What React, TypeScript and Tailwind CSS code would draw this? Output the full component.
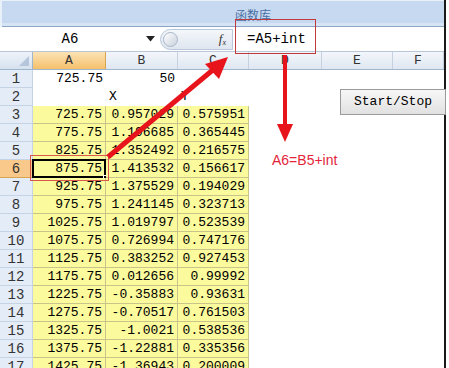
import React from 'react';

const mono = "font-['Liberation_Mono','DejaVu_Sans_Mono',monospace]";

const rows: [string, string, string][] = [
  ['725.75', '50', ''],
  ['', 'X', 'Y'],
  ['725.75', '0.957029', '0.575951'],
  ['775.75', '1.196685', '0.365445'],
  ['825.75', '1.352492', '0.216575'],
  ['875.75', '1.413532', '0.156617'],
  ['925.75', '1.375529', '0.194029'],
  ['975.75', '1.241145', '0.323713'],
  ['1025.75', '1.019797', '0.523539'],
  ['1075.75', '0.726994', '0.747176'],
  ['1125.75', '0.383252', '0.927453'],
  ['1175.75', '0.012656', '0.99992'],
  ['1225.75', '-0.35883', '0.93631'],
  ['1275.75', '-0.70517', '0.761503'],
  ['1325.75', '-1.0021', '0.538536'],
  ['1375.75', '-1.22881', '0.335356'],
  ['1425.75', '-1.36943', '0.200009'],
];

const cols = [
  { name: 'A', w: 'w-[73px]' },
  { name: 'B', w: 'w-[72px]' },
  { name: 'C', w: 'w-[71px]' },
  { name: 'D', w: 'w-[73px]' },
  { name: 'E', w: 'w-[71px]' },
  { name: 'F', w: 'flex-1' },
];

export default function App() {
  return (
    <div className="relative w-[449px] h-[368px] overflow-hidden bg-white">
      <div className="w-[446px] h-full border-r-2 border-[#1a1a1a] flex flex-col">
        {/* ribbon */}
        <div className="shrink-0 h-[27px] bg-[#c6d9f0] border-l-2 border-t border-[#e8f0fa] flex flex-col">
          <div className="flex-1 flex items-end justify-center pl-[60px] pb-[2px]">
            <span className="text-[12px] leading-none text-[#4a6fa5] font-['Noto_Sans_CJK_SC',sans-serif]">函数库</span>
          </div>
          <div className="h-[4px] bg-[#d6e4f5] border-b border-[#8aa4c4]" />
        </div>

        {/* formula bar */}
        <div className="shrink-0 h-[25px] flex items-center bg-white border-b border-[#b8c6d8]">
          <div className={`${mono} w-[140px] text-center text-[14px] text-black`}>A6</div>
          <div className="w-[20px] flex justify-center">
            <svg width="9" height="6" viewBox="0 0 9 6"><path d="M0 0 H9 L4.5 5.5 Z" fill="#222" /></svg>
          </div>
          <div className="relative w-[73px] h-[21px] rounded-l-full border border-[#b9c7d8] bg-gradient-to-b from-[#f4f7fb] to-[#dfe6ef] flex items-center justify-end pr-[6px]">
            <div className="absolute left-[2px] top-[2px] w-[15px] h-[15px] rounded-full border border-[#aab7c8] bg-gradient-to-br from-white to-[#c9d2dd]" />
            <span className="font-['Liberation_Serif',serif] italic text-[13px] text-[#333]">f<sub className="text-[8px]">x</sub></span>
          </div>
          <div className={`${mono} pl-[14px] text-[14px] text-black`}>=A5+int</div>
        </div>

        {/* column header */}
        <div className={`${mono} shrink-0 h-[18px] flex text-[13px] leading-[17px] border-b border-[#9eb6ce]`}>
          <div className="relative w-[33px] bg-gradient-to-b from-[#eef3fa] to-[#d6e1ee] border-r border-[#9eb6ce]">
            <svg className="absolute right-[3px] bottom-[3px]" width="10" height="10" viewBox="0 0 10 10"><path d="M10 0 V10 H0 Z" fill="#b5c6db" /></svg>
          </div>
          {cols.map(c => (
            <div
              key={c.name}
              className={`${c.w} text-center border-r ${c.name === 'A' ? 'bg-gradient-to-b from-[#fbe3b4] to-[#f5c06a] border-[#d9a44f] text-[#333]' : 'bg-gradient-to-b from-[#f3f6fb] to-[#dfe7f1] border-[#c5d1df] text-[#333]'}`}
            >
              {c.name}
            </div>
          ))}
        </div>

        {/* rows */}
        <div className={`${mono} shrink-0 text-[13px] leading-[18px] text-black`}>
          {rows.map((r, i) => {
            const n = i + 1;
            const yellow = n >= 3;
            const sel = n === 6;
            return (
              <div key={n} className="flex h-[18px]">
                <div className={`w-[33px] text-center text-[14px] border-r border-b ${sel ? 'bg-[#f8c98a] border-[#d9a44f]' : 'bg-[#e4ecf7] border-[#c5d3e4]'} text-[#333]`}>{n}</div>
                {r.map((v, j) => {
                  const left = n === 2;
                  return (
                    <div
                      key={j}
                      className={`relative ${cols[j].w} px-[3px] ${left ? 'text-left' : 'text-right'} ${yellow ? 'bg-[#fbfa9d] border-r border-b border-[#c9c58a]' : ''}`}
                    >
                      {v}
                      {sel && j === 0 && (
                        <div className="absolute inset-[-1px] border-2 border-black">
                          <div className="absolute right-[-4px] bottom-[-4px] w-[5px] h-[5px] bg-black border border-white" />
                        </div>
                      )}
                    </div>
                  );
                })}
                <div className="w-[73px]" />
                <div className="w-[71px]" />
                <div className="flex-1" />
              </div>
            );
          })}
        </div>
      </div>

      {/* Start/Stop button */}
      <div className={`${mono} absolute left-[340px] top-[89px] w-[106px] h-[26px] flex items-center justify-center text-[13px] text-black border border-[#9a9a9a] bg-gradient-to-b from-[#f7f7f7] to-[#e1e1e1]`}>
        Start/Stop
      </div>

      {/* annotations */}
      <div className="absolute left-[235px] top-[19px] w-[81px] h-[35px] border border-[#c03a3a]" />
      <div className="absolute left-[30px] top-[155px] w-[79px] h-[26px] border border-[#d8584a]" />
      <svg className="absolute left-0 top-0 pointer-events-none" width="449" height="368" viewBox="0 0 449 368">
        <line x1="108" y1="157" x2="214" y2="69" stroke="#e8141b" strokeWidth="5" />
        <path d="M228 57 L205 64 L219 79 Z" fill="#e8141b" />
        <line x1="285" y1="55" x2="285" y2="126" stroke="#e8141b" strokeWidth="4" />
        <path d="M277 124 L293 124 L285 142 Z" fill="#e8141b" />
      </svg>
      <div className="absolute left-[272px] top-[150px] text-[14px] text-[#e3243a] font-['Liberation_Sans',sans-serif]">A6=B5+int</div>
    </div>
  );
}
